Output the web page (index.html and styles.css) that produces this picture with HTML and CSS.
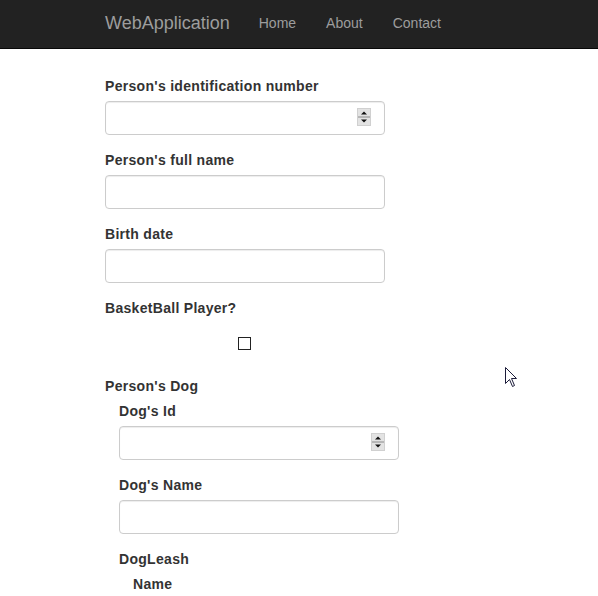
FILE: index.html
```html
<!DOCTYPE html>
<html>
<head>
<meta charset="utf-8">
<link rel="stylesheet" href="styles.css">
</head>
<body>
<nav class="navbar">
  <a class="brand" href="#">WebApplication</a>
  <a class="nav-link" href="#">Home</a>
  <a class="nav-link" href="#">About</a>
  <a class="nav-link" href="#">Contact</a>
</nav>
<main class="content">
  <div class="form-group">
    <label class="lbl">Person's identification number</label>
    <div class="field">
      <input class="form-control" type="text">
      <svg class="spinner" width="14" height="18" viewBox="0 0 14 18"><rect x="0.5" y="0.5" width="13" height="17" fill="#e3e3e3" stroke="#d0d0d0"/><line x1="1" y1="9" x2="13" y2="9" stroke="#8a8a8a"/><path d="M4 6.5 L10 6.5 L7 3.5 Z" fill="#111"/><path d="M4 11.5 L10 11.5 L7 14.5 Z" fill="#111"/></svg>
    </div>
  </div>
  <div class="form-group">
    <label class="lbl">Person's full name</label>
    <input class="form-control" type="text">
  </div>
  <div class="form-group">
    <label class="lbl">Birth date</label>
    <input class="form-control" type="text">
  </div>
  <div class="form-group">
    <label class="lbl">BasketBall Player?</label>
    <div class="check-row"><input class="check" type="checkbox"></div>
  </div>
  <div class="group-block">
    <label class="lbl">Person's Dog</label>
    <div class="nested">
      <div class="form-group">
        <label class="lbl">Dog's Id</label>
        <div class="field">
          <input class="form-control" type="text">
          <svg class="spinner" width="14" height="18" viewBox="0 0 14 18"><rect x="0.5" y="0.5" width="13" height="17" fill="#e3e3e3" stroke="#d0d0d0"/><line x1="1" y1="9" x2="13" y2="9" stroke="#8a8a8a"/><path d="M4 6.5 L10 6.5 L7 3.5 Z" fill="#111"/><path d="M4 11.5 L10 11.5 L7 14.5 Z" fill="#111"/></svg>
        </div>
      </div>
      <div class="form-group">
        <label class="lbl">Dog's Name</label>
        <input class="form-control" type="text">
      </div>
      <div class="group-block">
        <label class="lbl">DogLeash</label>
        <div class="nested">
          <label class="lbl">Name</label>
        </div>
      </div>
    </div>
  </div>
</main>
<svg class="cursor" width="13" height="21" viewBox="0 0 13 21"><path d="M0.5 0.5 L0.5 16.5 L4.5 12.5 L7.5 19.5 L9.5 18.5 L6.5 11.5 L11.5 11.5 Z" fill="#fff" stroke="#1c1c3a" stroke-width="1"/></svg>
</body>
</html>
```
FILE: styles.css
```css
* { box-sizing: border-box; }
html, body { margin: 0; padding: 0; background: #fff; }
body {
  font-family: "Liberation Sans", Arial, sans-serif;
  font-size: 14px;
  line-height: 20px;
  color: #333;
  width: 598px;
  height: 596px;
  overflow: hidden;
  position: relative;
}
.navbar {
  height: 49px;
  background: #222;
  border-bottom: 1px solid #080808;
  display: flex;
  align-items: center;
  padding-left: 90px;
}
.brand {
  font-size: 18px;
  line-height: 20px;
  color: #9d9d9d;
  text-decoration: none;
  padding: 0 15px;
  margin-top: -2px;
}
.nav-link {
  font-size: 14px;
  color: #9d9d9d;
  text-decoration: none;
  padding: 0 15px;
  margin-top: -2px;
}
.brand + .nav-link { margin-left: -1px; }
.content {
  padding: 27px 0 0 105px;
}
.form-group { margin-bottom: 15px; }
.group-block { display: flex; flex-direction: column; }
.lbl {
  display: block;
  font-weight: bold;
  margin-bottom: 5px;
  line-height: 20px;
  letter-spacing: 0.3px;
}
.nested { padding-left: 14px; }
.field { position: relative; width: 280px; }
.form-control {
  display: block;
  width: 280px;
  height: 34px;
  padding: 6px 12px;
  font-family: inherit;
  font-size: 14px;
  color: #555;
  background: #fff;
  border: 1px solid #ccc;
  border-radius: 4px;
  box-shadow: inset 0 1px 1px rgba(0,0,0,.075);
  outline: none;
}
.spinner {
  position: absolute;
  right: 14px;
  top: 7px;
}
.check-row {
  width: 278px;
  height: 38px;
  display: flex;
  align-items: center;
  justify-content: center;
  padding-top: 2px;
}
.check {
  -webkit-appearance: none;
  appearance: none;
  margin: 0;
  width: 13px;
  height: 13px;
  border: 1px solid #222;
  background: #fff;
  border-radius: 0;
}
.cursor {
  position: absolute;
  left: 505px;
  top: 367px;
}
```
